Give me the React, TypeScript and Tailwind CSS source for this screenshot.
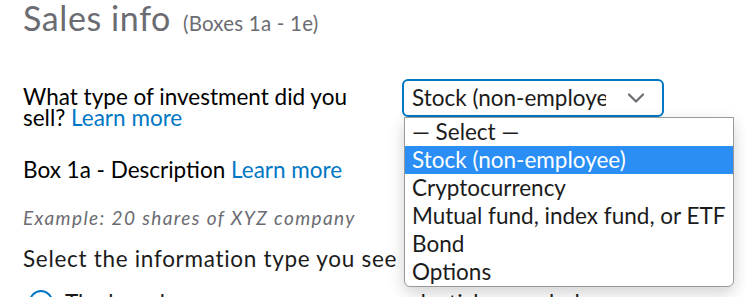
import React from 'react';

const options = [
  '— Select —',
  'Stock (non-employee)',
  'Cryptocurrency',
  'Mutual fund, index fund, or ETF',
  'Bond',
  'Options',
];

function Chevron() {
  return (
    <svg width="18" height="12" viewBox="0 0 18 12" fill="none">
      <path d="M2 2.5l7 7 7-7" stroke="#6b6c72" strokeWidth="2.2" strokeLinecap="round" strokeLinejoin="round" />
    </svg>
  );
}

export default function App() {
  const selected = 1;

  return (
    <div
      className="relative h-[297px] w-[745px] overflow-hidden bg-white pl-[23px] text-[#000000]"
      style={{ fontFamily: 'Lato, "Noto Sans", sans-serif' }}
    >
      <h1 className="flex items-baseline text-[#6b6c72]">
        <span className="text-[34px] leading-[36px] tracking-[0.6px]">Sales info</span>
        <span className="ml-[12px] text-[20.5px] tracking-[0.2px]">(Boxes 1a - 1e)</span>
      </h1>

      <div className="mt-[40px] flex items-start">
        <p className="w-[340px] pt-[7px] text-[22.5px] leading-[21px]">
          What type of investment did you sell? <span className="text-[#0077c5]">Learn more</span>
        </p>
        <div className="relative ml-[39px]">
          <div className="flex h-[38px] w-[262px] items-center rounded-[6px] border-2 border-[#0077c5] pl-[8px] pr-[17px]">
            <span className="w-[194px] overflow-hidden whitespace-nowrap text-[22.5px] text-[#1b1b1b]">
              Stock (non-employee)
            </span>
            <span className="ml-auto">
              <Chevron />
            </span>
          </div>

          <ul className="absolute left-[2px] top-[38px] z-10 w-[330px] rounded-b-[6px] border border-[#9a9a9a] bg-white shadow-[0_6px_16px_rgba(0,0,0,0.18)]">
            {options.map((o, i) => (
              <li
                key={o}
                className={`h-[28px] whitespace-nowrap pl-[7px] text-[22.5px] leading-[28px] ${
                  i === selected ? 'bg-[#2a8ef5] text-white' : 'text-[#1b1b1b]'
                }`}
              >
                {o}
              </li>
            ))}
          </ul>
        </div>
      </div>

      <p className="mt-[31px] text-[22.5px] leading-[22px]">
        Box 1a - Description <span className="text-[#0077c5]">Learn more</span>
      </p>

      <p className="mt-[26px] text-[19px] italic leading-[22px] tracking-[1.4px] text-[#6b6c72]">
        Example: 20 shares of XYZ company
      </p>

      <p className="mt-[19px] whitespace-nowrap text-[22.5px] leading-[22px] tracking-[0.7px] text-[#1b1b1b]">
        Select the information type you see in Box 1a
      </p>

      <div className="mt-[20px] flex items-start">
        <span className="ml-[6px] h-[24px] w-[24px] shrink-0 rounded-full border-2 border-[#0077c5]" />
        <span className="ml-[12px] mt-[-1px] whitespace-nowrap text-[22.5px] leading-[28px] text-[#1b1b1b]">
          The box shows a company name and a ticker symbol
        </span>
      </div>
    </div>
  );
}
